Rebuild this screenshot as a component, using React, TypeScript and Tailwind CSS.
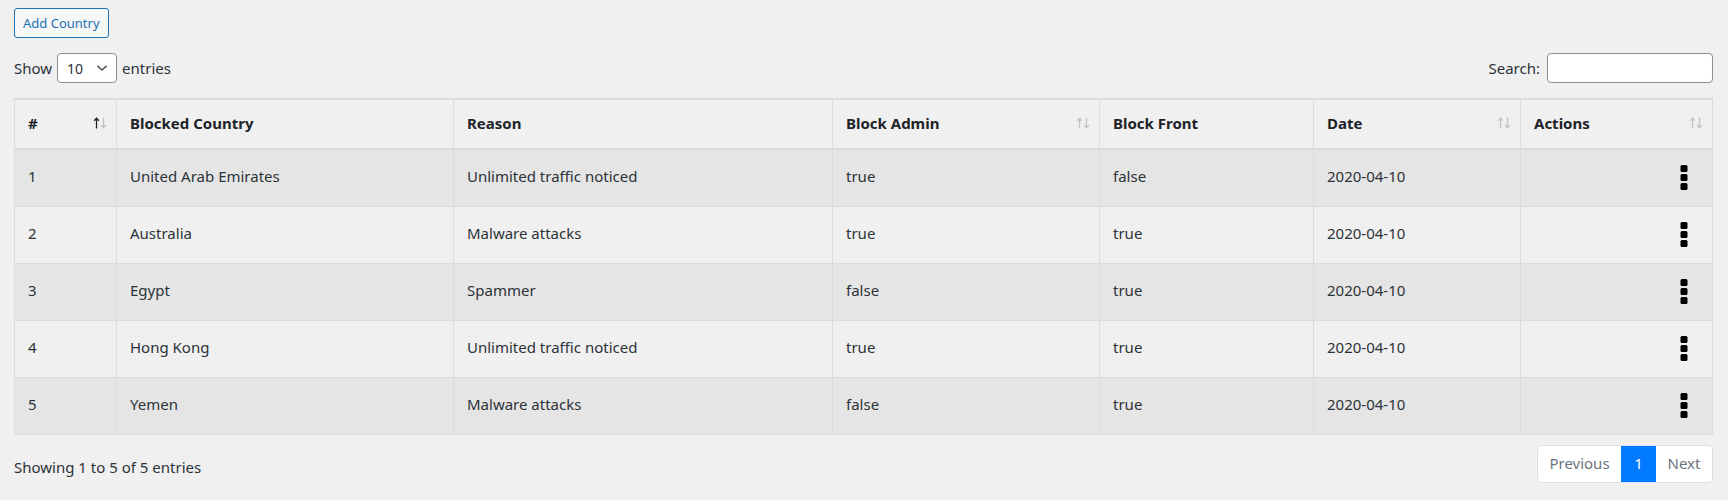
import React from "react";

const rows = [
  { id: 1, country: "United Arab Emirates", reason: "Unlimited traffic noticed", admin: "true", front: "false", date: "2020-04-10" },
  { id: 2, country: "Australia", reason: "Malware attacks", admin: "true", front: "true", date: "2020-04-10" },
  { id: 3, country: "Egypt", reason: "Spammer", admin: "false", front: "true", date: "2020-04-10" },
  { id: 4, country: "Hong Kong", reason: "Unlimited traffic noticed", admin: "true", front: "true", date: "2020-04-10" },
  { id: 5, country: "Yemen", reason: "Malware attacks", admin: "false", front: "true", date: "2020-04-10" },
];

function SortArrows({ active }: { active?: boolean }) {
  return (
    <svg width="14" height="12" viewBox="0 0 14 12" className="absolute right-[9px] top-[17px]">
      <g fill="none" strokeWidth="1.3">
        <path d="M3.5 11.5V1.5M1.2 3.8L3.5 1.3L5.8 3.8" stroke={active ? "#1d2327" : "#c3c4c7"} />
        <path d="M10.5 0.5V10.5M8.2 8.2L10.5 10.7L12.8 8.2" stroke="#c3c4c7" />
      </g>
    </svg>
  );
}

function Kebab() {
  return (
    <svg width="8" height="25" viewBox="0 0 8 25" className="block">
      <rect x="0.5" y="0" width="7" height="7" rx="1.5" fill="#000" />
      <rect x="0.5" y="9" width="7" height="7" rx="1.5" fill="#000" />
      <rect x="0.5" y="18" width="7" height="7" rx="1.5" fill="#000" />
    </svg>
  );
}

export default function App() {
  const font = { fontFamily: '"Noto Sans", "Open Sans", sans-serif' };
  const th = "relative h-[50px] px-[13px] pb-[1px] text-left align-middle font-bold text-[15px] text-[#1d2327] border-l border-[#dcdcde] first:border-l-0 border-b-2";
  const td = "h-[57px] px-[13px] pb-[3px] align-middle text-[15px] text-[#2c3338] border-l border-[#dcdcde] first:border-l-0";
  return (
    <div className="min-h-[500px] w-full bg-[#f0f0f1] pl-[14px] pr-[15px] pt-[8px]" style={font}>
      <button className="h-[30px] px-[8px] rounded-[3px] border border-[#2271b1] bg-[#f6f7f7] text-[13px] text-[#2271b1] leading-none">
        Add Country
      </button>

      <div className="mt-[15px] flex items-center justify-between h-[30px]">
        <div className="flex items-center text-[15px] text-[#2c3338]">
          <span>Show</span>
          <div className="mx-[5px] flex h-[30px] w-[60px] items-center justify-between rounded-[4px] border border-[#8c8f94] bg-white pl-[9px] pr-[8px]">
            <span className="text-[14px] text-[#2c3338]">10</span>
            <svg width="12" height="8" viewBox="0 0 12 8">
              <path d="M1.5 1.8L6 6L10.5 1.8" fill="none" stroke="#50575e" strokeWidth="1.6" />
            </svg>
          </div>
          <span>entries</span>
        </div>
        <div className="flex items-center text-[15px] text-[#2c3338]">
          <span className="mr-[7px]">Search:</span>
          <div className="h-[30px] w-[166px] rounded-[4px] border border-[#8c8f94] bg-white" />
        </div>
      </div>

      <table className="mt-[15px] w-full table-fixed border-collapse border border-t-2 border-[#dcdcde]">
        <colgroup>
          <col className="w-[102px]" />
          <col className="w-[337px]" />
          <col className="w-[379px]" />
          <col className="w-[267px]" />
          <col className="w-[214px]" />
          <col className="w-[207px]" />
          <col />
        </colgroup>
        <thead>
          <tr className="bg-[#f0f0f1]">
            <th className={th}>#<SortArrows active /></th>
            <th className={th}>Blocked Country</th>
            <th className={th}>Reason</th>
            <th className={th}>Block Admin<SortArrows /></th>
            <th className={th}>Block Front</th>
            <th className={th}>Date<SortArrows /></th>
            <th className={th}>Actions<SortArrows /></th>
          </tr>
        </thead>
        <tbody>
          {rows.map((r, i) => (
            <tr key={r.id} className={i % 2 === 0 ? "bg-[#e5e5e5] border-t border-[#dcdcde]" : "bg-[#f0f0f1] border-t border-[#dcdcde]"}>
              <td className={td}>{r.id}</td>
              <td className={td}>{r.country}</td>
              <td className={td}>{r.reason}</td>
              <td className={td}>{r.admin}</td>
              <td className={td}>{r.front}</td>
              <td className={td}>{r.date}</td>
              <td className={td}>
                <div className="flex justify-end pr-[11px] pt-[3px]">
                  <Kebab />
                </div>
              </td>
            </tr>
          ))}
        </tbody>
      </table>

      <div className="mt-[10px] flex items-start justify-between">
        <span className="pt-[12px] text-[15px] leading-[21px] text-[#2c3338]">Showing 1 to 5 of 5 entries</span>
        <div className="flex h-[38px] overflow-hidden rounded-[4px] border border-[#dee2e6] bg-white text-[15px]">
          <span className="flex w-[83px] items-center justify-center text-[#6c757d]">Previous</span>
          <span className="flex w-[35px] items-center justify-center bg-[#007bff] text-white">1</span>
          <span className="flex w-[56px] items-center justify-center text-[#6c757d]">Next</span>
        </div>
      </div>
    </div>
  );
}
